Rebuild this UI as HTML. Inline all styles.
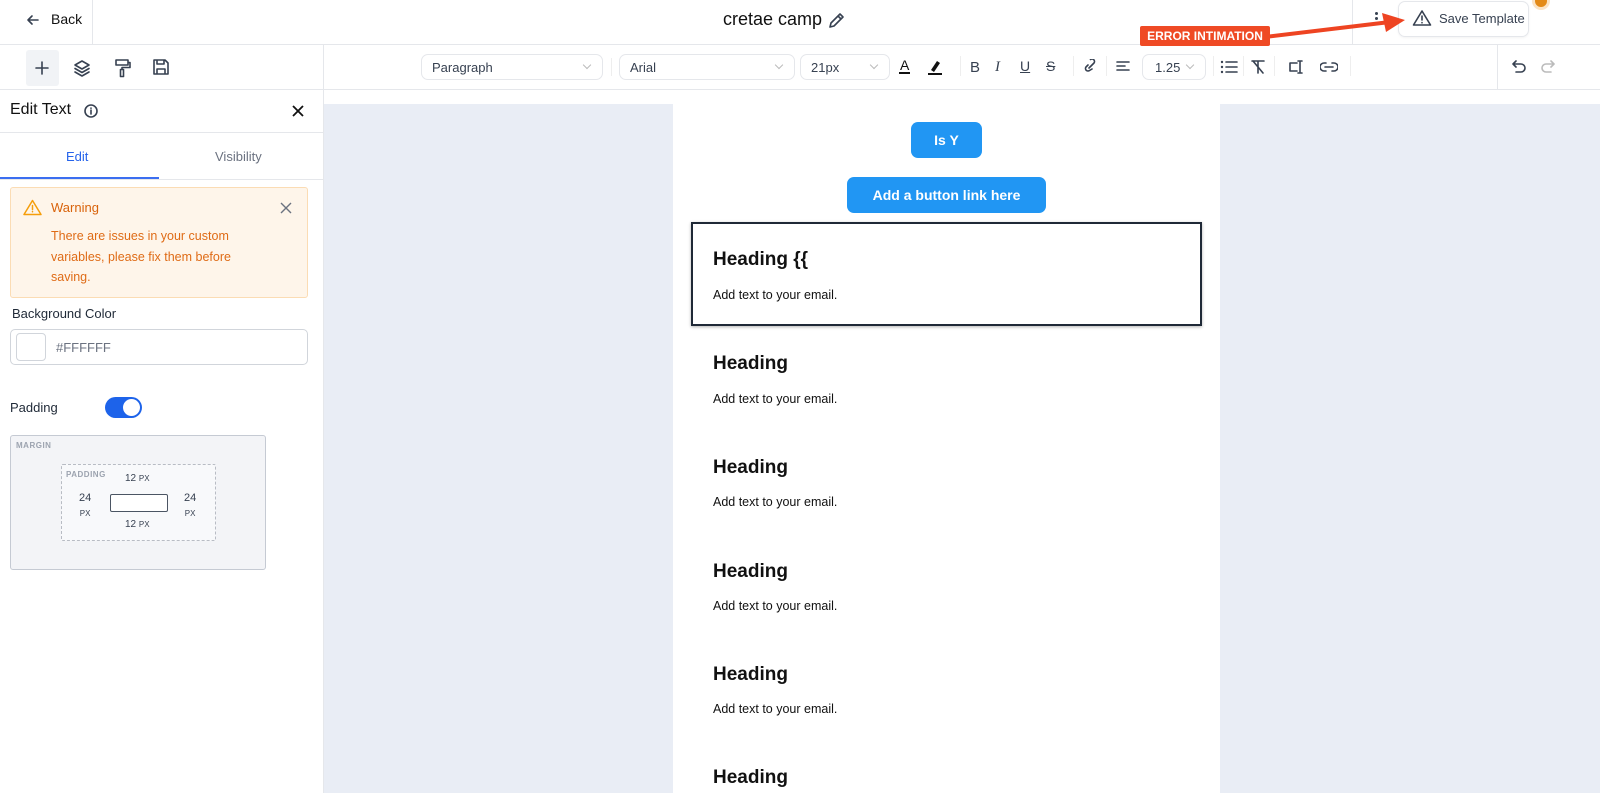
<!DOCTYPE html>
<html><head><meta charset="utf-8"><style>
*{box-sizing:border-box;margin:0;padding:0}
body{width:1600px;height:793px;overflow:hidden;font-family:"Liberation Sans",Arial,sans-serif;background:#fff;position:relative;color:#1f2937}
.a{position:absolute}
.ic{stroke:#374151;fill:none;stroke-width:1.6;stroke-linecap:round;stroke-linejoin:round}
.sel{position:absolute;top:54px;height:26px;border:1px solid #e5e7eb;border-radius:7px;font-size:13px;color:#374151;padding:5px 10px}
.sel:after{content:"";position:absolute;right:12px;top:7px;width:5px;height:5px;border-right:1px solid #bbb;border-bottom:1px solid #bbb;transform:rotate(45deg)}
.h{position:absolute;left:713px;font-size:19px;font-weight:bold;color:#111}
.t{position:absolute;left:713px;font-size:12.5px;color:#111}
</style></head><body>
<div class="a" style="left:0;top:44px;width:1600px;height:1px;background:#e5e7eb"></div>
<div class="a" style="left:92px;top:0;width:1px;height:44px;background:#e5e7eb"></div>
<svg class="a" style="left:25px;top:12px" width="16" height="16"><path class="ic" d="M13 8H3M7 4L3 8l4 4"/></svg>
<div class="a" style="left:51px;top:11px;font-size:14px;color:#111">Back</div>
<div class="a" style="left:723px;top:9px;font-size:18px;color:#111">cretae camp</div>
<svg class="a" style="left:827px;top:10px" width="20" height="20"><path class="ic" d="M3 17l1-4L13 4l3 3-9 9zM11 6l3 3"/></svg>
<div class="a" style="left:1352px;top:0;width:1px;height:44px;background:#e5e7eb"></div>
<div class="a" style="left:1375px;top:12px;width:3px;height:3px;border-radius:2px;background:#374151;box-shadow:0 5px 0 #374151"></div>
<div class="a" style="left:1398px;top:1px;width:131px;height:36px;border:1px solid #e5e7eb;border-radius:7px;box-shadow:0 1px 2px rgba(0,0,0,.05)"></div>
<svg class="a" style="left:1412px;top:9px" width="20" height="18"><path class="ic" d="M10 2L1.5 16h17zM10 7v4M10 13.5v.3"/></svg>
<div class="a" style="left:1439px;top:11px;font-size:13px;color:#374151">Save Template</div>
<div class="a" style="left:1535px;top:-5px;width:12px;height:12px;border-radius:6px;background:#e38a17;box-shadow:0 0 0 3px #fbe3c4"></div>
<svg class="a" style="left:1260px;top:10px" width="150" height="40"><path d="M5 27L130 12" stroke="#ee4422" stroke-width="4"/><path d="M122 3L145 10 126 22z" fill="#ee4422"/></svg>
<div class="a" style="left:1140px;top:26px;width:130px;height:20px;background:#ef4a25;border-radius:2px;color:#fff;font-size:12px;font-weight:bold;text-align:center;line-height:20px">ERROR INTIMATION</div>
<div class="a" style="left:0;top:89px;width:1600px;height:1px;background:#e5e7eb"></div>
<div class="a" style="left:323px;top:45px;width:1px;height:748px;background:#e5e7eb"></div>
<div class="a" style="left:26px;top:50px;width:33px;height:36px;background:#f1f3f6;border-radius:3px"></div>
<svg class="a" style="left:33px;top:59px" width="18" height="18"><path class="ic" d="M9 3v12M3 9h12"/></svg>
<svg class="a" style="left:73px;top:59px" width="18" height="18"><path class="ic" d="M9 2L2 6l7 4 7-4zM2 9.5l7 4 7-4M2 13l7 4 7-4"/></svg>
<svg class="a" style="left:114px;top:58px" width="18" height="20"><path class="ic" d="M2 2h12v5H2zM14 4.5h2v5H8v2M6.5 11.5h3v7h-3z"/></svg>
<svg class="a" style="left:152px;top:58px" width="18" height="18"><path class="ic" d="M2 2h11l3 3v11H2zM5 2v4h7V2M5 16v-5h8v5"/></svg>
<div class="sel" style="left:421px;width:182px">Paragraph</div>
<div class="a" style="left:611px;top:58px;width:1px;height:18px;background:#eee"></div>
<div class="sel" style="left:619px;width:176px">Arial</div>
<div class="sel" style="left:800px;width:90px">21px</div>
<div class="a" style="left:899px;top:58px;font-size:14px;color:#111;border-bottom:2px solid #111;line-height:14px;padding:0 1px">A</div>
<svg class="a" style="left:927px;top:58px" width="16" height="18"><path d="M4 12l6-9 3 2-6 9z" fill="#111"/><path d="M1 16h14" stroke="#111" stroke-width="2"/></svg>
<div class="a" style="left:960px;top:56px;width:1px;height:20px;background:#eee"></div>
<div class="a" style="left:970px;top:59px;font-size:15px;color:#374151">B</div>
<div class="a" style="left:995px;top:59px;font-size:15px;color:#374151;font-style:italic;font-family:'Liberation Serif'">I</div>
<div class="a" style="left:1020px;top:58px;font-size:14px;color:#374151;text-decoration:underline">U</div>
<div class="a" style="left:1046px;top:58px;font-size:14px;color:#374151;text-decoration:line-through">S</div>
<div class="a" style="left:1073px;top:56px;width:1px;height:20px;background:#eee"></div>
<svg class="a" style="left:1082px;top:59px" width="16" height="16"><path class="ic" d="M7 9l3-3M6 6L4 8a2.5 2.5 0 003.5 3.5L10 10M10 6l2-2a2.5 2.5 0 00-3.5-3.5"/></svg>
<div class="a" style="left:1106px;top:56px;width:1px;height:20px;background:#eee"></div>
<svg class="a" style="left:1116px;top:60px" width="14" height="14"><path class="ic" d="M1 2h12M1 6h8M1 10h12"/></svg>
<div class="sel" style="left:1142px;width:64px;padding-left:12px">1.25</div>
<div class="a" style="left:1213px;top:56px;width:1px;height:20px;background:#eee"></div>
<svg class="a" style="left:1220px;top:59px" width="18" height="16"><path class="ic" d="M6 3h11M6 8h11M6 13h11"/><circle cx="2" cy="3" r="1.2" fill="#374151"/><circle cx="2" cy="8" r="1.2" fill="#374151"/><circle cx="2" cy="13" r="1.2" fill="#374151"/></svg>
<div class="a" style="left:1243px;top:56px;width:1px;height:20px;background:#eee"></div>
<svg class="a" style="left:1250px;top:59px" width="16" height="16"><path class="ic" d="M2 2h12M8 2v12M3 2l10 12"/></svg>
<div class="a" style="left:1274px;top:56px;width:1px;height:20px;background:#eee"></div>
<svg class="a" style="left:1288px;top:59px" width="18" height="16"><path class="ic" d="M9 4H2v8h7M12 2v12M10 2h4M10 14h4"/></svg>
<svg class="a" style="left:1320px;top:60px" width="18" height="14"><path class="ic" d="M6 3H4a4 4 0 000 8h2M12 3h2a4 4 0 010 8h-2M5 7h8"/></svg>
<div class="a" style="left:1350px;top:56px;width:1px;height:20px;background:#eee"></div>
<div class="a" style="left:1497px;top:45px;width:1px;height:44px;background:#e5e7eb"></div>
<svg class="a" style="left:1512px;top:60px" width="14" height="14"><path class="ic" d="M4 1L1 4l3 3M1 4h8a4 4 0 010 8H4"/></svg>
<svg class="a" style="left:1541px;top:60px" width="14" height="14"><path d="M10 1l3 3-3 3M13 4H5a4 4 0 000 8h5" stroke="#bbb" fill="none" stroke-width="1.6" stroke-linecap="round"/></svg>
<div class="a" style="left:10px;top:101px;font-size:16px;color:#111">Edit Text</div>
<svg class="a" style="left:84px;top:104px" width="14" height="14"><circle cx="7" cy="7" r="6" class="ic" stroke-width="1.3"/><path class="ic" d="M7 6v4M7 4v.2" stroke-width="1.3"/></svg>
<svg class="a" style="left:291px;top:104px" width="14" height="14"><path d="M2 2l10 10M12 2L2 12" stroke="#111" stroke-width="1.8"/></svg>
<div class="a" style="left:0;top:132px;width:323px;height:1px;background:#e5e7eb"></div>
<div class="a" style="left:66px;top:149px;font-size:13px;color:#2563eb">Edit</div>
<div class="a" style="left:215px;top:149px;font-size:13px;color:#6b7280">Visibility</div>
<div class="a" style="left:0;top:179px;width:323px;height:1px;background:#e5e7eb"></div>
<div class="a" style="left:0;top:177px;width:159px;height:2px;background:#3b6ef0"></div>
<div class="a" style="left:10px;top:187px;width:298px;height:111px;background:#fef5ea;border:1px solid #fbdcb4;border-radius:3px"></div>
<svg class="a" style="left:23px;top:199px" width="19" height="17"><path d="M9.5 1.5L1 15.5h17zM9.5 6.5v4M9.5 12.5v.3" stroke="#f59e0b" fill="none" stroke-width="1.5" stroke-linecap="round" stroke-linejoin="round"/></svg>
<div class="a" style="left:51px;top:200px;font-size:13px;color:#d9630b">Warning</div>
<svg class="a" style="left:280px;top:202px" width="12" height="12"><path d="M1 1l10 10M11 1L1 11" stroke="#6b7280" stroke-width="1.4"/></svg>
<div class="a" style="left:51px;top:226px;width:200px;font-size:12.5px;line-height:20.5px;color:#df6b16">There are issues in your custom variables, please fix them before saving.</div>
<div class="a" style="left:12px;top:306px;font-size:13px;color:#1f2937">Background Color</div>
<div class="a" style="left:10px;top:329px;width:298px;height:36px;border:1px solid #d1d5db;border-radius:5px"></div>
<div class="a" style="left:16px;top:333px;width:30px;height:28px;border:1px solid #d1d5db;border-radius:4px;background:#fff"></div>
<div class="a" style="left:56px;top:340px;font-size:13px;color:#6b7280">#FFFFFF</div>
<div class="a" style="left:10px;top:400px;font-size:13px;color:#1f2937">Padding</div>
<div class="a" style="left:105px;top:397px;width:37px;height:21px;border-radius:11px;background:#1d63ea"></div>
<div class="a" style="left:123px;top:399px;width:17px;height:17px;border-radius:9px;background:#fff"></div>
<div class="a" style="left:10px;top:435px;width:256px;height:135px;border:1px solid #c5cad3;border-radius:3px;background:#f3f4f7"></div>
<div class="a" style="left:16px;top:441px;font-size:8px;font-weight:bold;color:#9ca3af;letter-spacing:.5px">MARGIN</div>
<div class="a" style="left:61px;top:464px;width:155px;height:77px;border:1px dashed #b8bcc4;border-radius:2px;background:#f8f9fb"></div>
<div class="a" style="left:66px;top:470px;font-size:8px;font-weight:bold;color:#9ca3af;letter-spacing:.5px">PADDING</div>
<div class="a" style="left:125px;top:473px;font-size:10px;color:#374151">12 <span style="font-size:8px">PX</span></div>
<div class="a" style="left:125px;top:519px;font-size:10px;color:#374151">12 <span style="font-size:8px">PX</span></div>
<div class="a" style="left:79px;top:491px;font-size:11px;color:#374151;text-align:center;line-height:15px">24<br><span style="font-size:8px">PX</span></div>
<div class="a" style="left:184px;top:491px;font-size:11px;color:#374151;text-align:center;line-height:15px">24<br><span style="font-size:8px">PX</span></div>
<div class="a" style="left:110px;top:494px;width:58px;height:18px;border:1px solid #4b5563;border-radius:2px;background:#fff"></div>
<div class="a" style="left:324px;top:104px;width:1276px;height:689px;background:#e9edf5"></div>
<div class="a" style="left:673px;top:104px;width:547px;height:689px;background:#fff"></div>
<div class="a" style="left:911px;top:122px;width:71px;height:36px;border-radius:7px;background:#2196f3;color:#fff;font-size:14px;font-weight:bold;text-align:center;line-height:36px">Is Y</div>
<div class="a" style="left:847px;top:177px;width:199px;height:36px;border-radius:7px;background:#2196f3;color:#fff;font-size:14px;font-weight:bold;text-align:center;line-height:36px">Add a button link here</div>
<div class="a" style="left:691px;top:222px;width:511px;height:104px;border:2px solid #1f2937;box-shadow:0 1px 3px rgba(0,0,0,.3)"></div>
<div class="h" style="top:249px">Heading {{</div>
<div class="t" style="top:288px">Add text to your email.</div>
<div class="h" style="top:353px">Heading</div><div class="t" style="top:392px">Add text to your email.</div>
<div class="h" style="top:457px">Heading</div><div class="t" style="top:495px">Add text to your email.</div>
<div class="h" style="top:561px">Heading</div><div class="t" style="top:599px">Add text to your email.</div>
<div class="h" style="top:664px">Heading</div><div class="t" style="top:702px">Add text to your email.</div>
<div class="h" style="top:767px">Heading</div>
</body></html>
